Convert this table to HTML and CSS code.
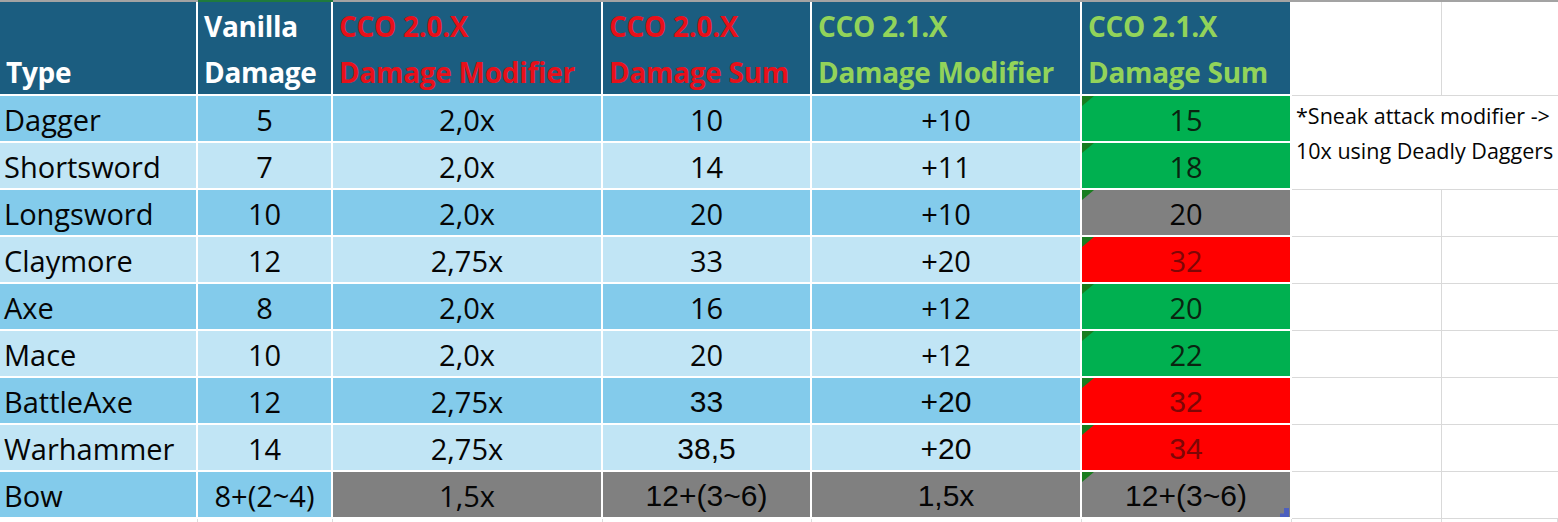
FILE: index.html
```html
<!DOCTYPE html>
<html lang="en">
<head>
<meta charset="utf-8">
<title>CCO damage table</title>
<link rel="stylesheet" href="styles.css">
</head>
<body>
<div class="sheet">
  <div class="topbar"><span class="topbar-sel"></span></div>
  <div class="grid">
    <div class="cell head left"><span>&nbsp;<br>Type</span></div>
    <div class="cell head left"><span>Vanilla<br>Damage</span></div>
    <div class="cell head left red"><span>CCO 2.0.X<br>Damage Modifier</span></div>
    <div class="cell head left red"><span>CCO 2.0.X<br>Damage Sum</span></div>
    <div class="cell head left green"><span>CCO 2.1.X<br>Damage Modifier</span></div>
    <div class="cell head left green"><span>CCO 2.1.X<br>Damage Sum</span></div>
    <div class="blank gl"></div>
    <div class="blank"></div>

    <div class="cell dk left">Dagger</div>
    <div class="cell dk">5</div>
    <div class="cell dk">2,0x</div>
    <div class="cell dk">10</div>
    <div class="cell dk">+10</div>
    <div class="cell sum good">15</div>
    <div class="note">*Sneak attack modifier -&gt;<br>10x using Deadly Daggers</div>

    <div class="cell lt left">Shortsword</div>
    <div class="cell lt">7</div>
    <div class="cell lt">2,0x</div>
    <div class="cell lt">14</div>
    <div class="cell lt">+11</div>
    <div class="cell sum good">18</div>

    <div class="cell dk left">Longsword</div>
    <div class="cell dk">10</div>
    <div class="cell dk">2,0x</div>
    <div class="cell dk">20</div>
    <div class="cell dk">+10</div>
    <div class="cell sum same">20</div>
    <div class="blank gl"></div>
    <div class="blank"></div>

    <div class="cell lt left">Claymore</div>
    <div class="cell lt">12</div>
    <div class="cell lt">2,75x</div>
    <div class="cell lt">33</div>
    <div class="cell lt">+20</div>
    <div class="cell sum bad">32</div>
    <div class="blank gl"></div>
    <div class="blank"></div>

    <div class="cell dk left">Axe</div>
    <div class="cell dk">8</div>
    <div class="cell dk">2,0x</div>
    <div class="cell dk">16</div>
    <div class="cell dk">+12</div>
    <div class="cell sum good">20</div>
    <div class="blank gl"></div>
    <div class="blank"></div>

    <div class="cell lt left">Mace</div>
    <div class="cell lt">10</div>
    <div class="cell lt">2,0x</div>
    <div class="cell lt">20</div>
    <div class="cell lt">+12</div>
    <div class="cell sum good">22</div>
    <div class="blank gl"></div>
    <div class="blank"></div>

    <div class="cell dk left">BattleAxe</div>
    <div class="cell dk">12</div>
    <div class="cell dk">2,75x</div>
    <div class="cell dk arial">33</div>
    <div class="cell dk arial">+20</div>
    <div class="cell sum bad arial">32</div>
    <div class="blank gl"></div>
    <div class="blank"></div>

    <div class="cell lt left">Warhammer</div>
    <div class="cell lt">14</div>
    <div class="cell lt">2,75x</div>
    <div class="cell lt arial">38,5</div>
    <div class="cell lt arial">+20</div>
    <div class="cell sum bad arial">34</div>
    <div class="blank gl"></div>
    <div class="blank"></div>

    <div class="cell dk left">Bow</div>
    <div class="cell dk">8+(2~4)</div>
    <div class="cell gray">1,5x</div>
    <div class="cell gray arial">12+(3~6)</div>
    <div class="cell gray arial">1,5x</div>
    <div class="cell sum same arial last">12+(3~6)</div>
    <div class="blank gl"></div>
    <div class="blank"></div>

    <div class="tail"></div>
    <div class="tail"></div>
    <div class="tail"></div>
    <div class="tail"></div>
    <div class="tail"></div>
    <div class="tail"></div>
    <div class="tail"></div>
    <div class="tail"></div>
  </div>
</div>
</body>
</html>
```
FILE: styles.css
```css
html, body {
  margin: 0;
  padding: 0;
  background: #ffffff;
}

.sheet {
  width: 1558px;
  font-family: "Open Sans", "Liberation Sans", sans-serif;
  color: #050505;
}

.topbar {
  height: 2px;
  background: #a3a3a3;
  display: flex;
}

.topbar-sel {
  width: 135px;
  margin-left: 198px;
  background: #1f7a3e;
}

.grid {
  display: grid;
  grid-template-columns: 198px 135px 270px 209px 270px 210px 150px 116px;
  grid-template-rows: 94px repeat(9, 47px) 4px;
}

.cell {
  box-sizing: border-box;
  border-right: 2px solid #ffffff;
  border-bottom: 2px solid #ffffff;
  display: flex;
  align-items: center;
  justify-content: center;
  font-size: 29px;
  padding-top: 1px;
  position: relative;
  white-space: nowrap;
}

.cell.left {
  justify-content: flex-start;
  padding-left: 4px;
}

.head {
  background: #1b5d80;
  color: #ffffff;
  font-weight: bold;
  font-size: 28px;
  line-height: 46px;
  align-items: flex-start;
  padding-top: 1px;
  letter-spacing: -0.3px;
}

.head.left {
  padding-left: 6px;
}

.head.red {
  color: #e8101a;
}

.head.green {
  color: #92d35a;
}

.dk {
  background: #83cbeb;
}

.lt {
  background: #c1e5f5;
}

.gray {
  background: #808080;
}

.good {
  background: #00b050;
  color: #0a2410;
}

.bad {
  background: #ff0000;
  color: #7e0606;
}

.same {
  background: #808080;
}

.arial {
  font-family: "Liberation Sans", Arial, sans-serif;
  font-size: 30px;
  padding-top: 2px;
}

.sum::before {
  content: "";
  position: absolute;
  left: 0;
  top: 0;
  width: 12px;
  height: 10px;
  background: #197d1f;
  clip-path: polygon(0 0, 100% 0, 0 100%);
}

.last::after {
  content: "";
  position: absolute;
  right: 1px;
  bottom: 0;
  width: 9px;
  height: 9px;
  background: #4c5fbf;
  clip-path: polygon(100% 0, 100% 100%, 0 100%, 0 60%, 45% 60%, 45% 0);
}

.blank {
  box-sizing: border-box;
  border-bottom: 1px solid #d9d9d9;
}

.blank.gl {
  border-right: 1px solid #d9d9d9;
}

.note {
  grid-column: 7 / 9;
  grid-row: span 2;
  box-sizing: border-box;
  border-bottom: 1px solid #d9d9d9;
  padding: 2px 0 0 4px;
  font-size: 21.5px;
  line-height: 35px;
  white-space: nowrap;
  color: #050505;
}

.tail {
  box-sizing: border-box;
  border-right: 1px solid #dcdcdc;
}
```
